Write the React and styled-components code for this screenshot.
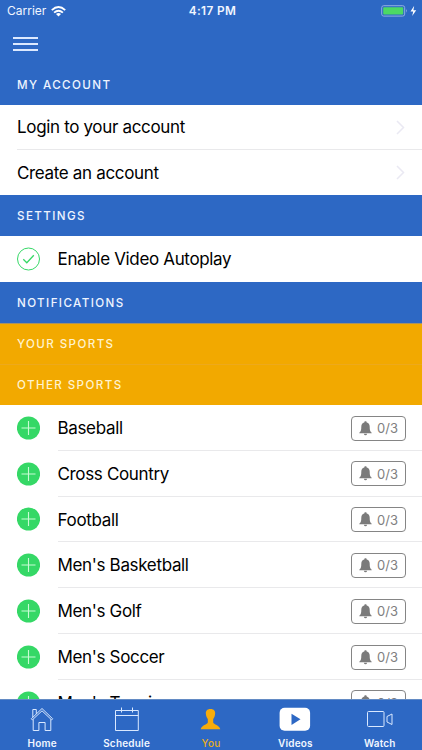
import React from "react";
import styled, { createGlobalStyle } from "styled-components";

const BLUE = "#2d68c4";
const GOLD = "#f2a900";
const GREEN = "#35d866";

const GlobalStyle = createGlobalStyle`
  * { box-sizing: border-box; }
  body { margin: 0; background: #fff; }
`;

const Screen = styled.div`
  width: 422px;
  height: 750px;
  overflow: hidden;
  display: flex;
  flex-direction: column;
  background: #fff;
  color: #000;
  font-family: Inter, "Liberation Sans", sans-serif;
`;

const StatusBar = styled.div`
  height: 22px;
  flex: none;
  display: grid;
  grid-template-columns: 1fr auto 1fr;
  align-items: center;
  padding: 0 4px 0 7px;
  background: ${BLUE};
  color: #f1f6ff;
`;

const Carrier = styled.div`
  display: flex;
  align-items: center;
  gap: 5px;
  font-size: 12px;
  line-height: 14px;
  letter-spacing: 0;
`;

const Clock = styled.div`
  font-size: 11.8px;
  font-weight: 600;
  letter-spacing: 0.4px;
`;

const Battery = styled.div`
  display: flex;
  justify-content: flex-end;
`;

const NavBar = styled.div`
  height: 42px;
  flex: none;
  display: flex;
  align-items: center;
  padding: 1px 13px 0;
  background: ${BLUE};
`;

const MenuButton = styled.button`
  display: flex;
  flex-direction: column;
  gap: 4px;
  width: 25px;
  padding: 0;
  border: 0;
  background: none;
`;

const MenuLine = styled.span`
  height: 2px;
  background: #dce9ff;
`;

const Content = styled.main`
  flex: 1;
  min-height: 0;
  overflow: hidden;
`;

const SectionTitle = styled.h2`
  height: 41px;
  margin: 0;
  padding: 0 17px 1px;
  display: flex;
  align-items: center;
  background: ${({ $tone }) => ($tone === "gold" ? GOLD : BLUE)};
  color: ${({ $tone }) => ($tone === "gold" ? "#fff3cf" : "#edf4ff")};
  border-top: 1px solid ${({ $line }) => $line || "transparent"};
  font-size: 11.6px;
  font-weight: 450;
  letter-spacing: 1.4px;
`;

const Row = styled.div`
  height: ${({ $height }) => $height}px;
  padding-left: 17px;
  display: flex;
`;

const RowIcon = styled.div`
  width: 40.5px;
  flex: none;
  display: flex;
  align-items: center;
`;

const RowBody = styled.div`
  flex: 1;
  padding-right: ${({ $inset }) => $inset}px;
  padding-top: ${({ $drop }) => $drop || 0}px;
  display: flex;
  align-items: center;
  justify-content: space-between;
  border-bottom: ${({ $last }) => ($last ? "0" : "1px solid #e9e9eb")};
`;

const Label = styled.span`
  font-size: 17px;
  letter-spacing: -0.34px;
  white-space: nowrap;
`;

const AlertButton = styled.button`
  width: 55px;
  height: 25px;
  padding: 0 7px;
  display: flex;
  align-items: center;
  justify-content: space-between;
  border: 1px solid #858585;
  border-radius: 4px;
  background: #fff;
  color: #808080;
  font: 400 13px Inter, sans-serif;
`;

const TabBar = styled.nav`
  height: 51px;
  flex: none;
  display: grid;
  grid-template-columns: repeat(5, 1fr);
  background: ${BLUE};
  border-top: 1px solid #638bc4;
`;

const Tab = styled.a`
  display: flex;
  flex-direction: column;
  align-items: center;
  gap: 1px;
  color: ${({ $active }) => ($active ? "#e9ad20" : "#f0f6ff")};
  font-size: 10px;
  font-weight: ${({ $active }) => ($active ? 500 : 600)};
  line-height: 12px;
  letter-spacing: 0.2px;
`;

const TabIcon = styled.svg`
  width: 32px;
  height: 36px;
  overflow: visible;
  fill: none;
  stroke: #d9e8ff;
  stroke-width: 1;
`;

const WifiIcon = () => (
  <svg width="15" height="11" viewBox="0 0 15 11" fill="none" stroke="#fff" strokeWidth="1.9">
    <path d="M.8 4.1Q7.5-1.9 14.2 4.1" />
    <path d="M3.1 6.6Q7.5 2.8 11.9 6.6" />
    <path d="M7.5 10.4 5 7.9Q7.5 6 10 7.9Z" fill="#fff" stroke="none" />
  </svg>
);

const BatteryIcon = () => (
  <svg width="37" height="12" viewBox="0 0 37 12">
    <rect x=".7" y=".7" width="23" height="10.4" rx="2" fill="none" stroke="#91afe0" />
    <rect x="2.2" y="2.2" width="20" height="7.4" rx=".8" fill="#4cd964" />
    <path d="M25.2 4q1.7 1.8 0 3.7Z" fill="#91afe0" />
    <path d="M33.2.8 29.5 6.4h2.7L31.2 11l4-5.8h-2.8Z" fill="#fff" />
  </svg>
);

const Chevron = () => (
  <svg width="9" height="15" viewBox="0 0 9 15" fill="none" stroke="#eae9f3" strokeWidth="1.5">
    <path d="m1 1 6.5 6.5L1 14" />
  </svg>
);

const CheckIcon = () => (
  <svg width="23" height="24" viewBox="0 0 23 24" fill="none" stroke={GREEN}>
    <circle cx="11.5" cy="12" r="11" strokeWidth="1" />
    <path d="m6.3 12.3 3.5 3.4 7-7.4" strokeWidth="1.3" />
  </svg>
);

const PlusIcon = () => (
  <svg width="23" height="24" viewBox="0 0 23 24">
    <circle cx="11.5" cy="12" r="11.6" fill={GREEN} />
    <path d="M4.5 12h14M11.5 5v14" stroke="#c9fbd5" strokeWidth="1.1" />
  </svg>
);

const BellIcon = () => (
  <svg width="13" height="15" viewBox="0 0 13 15" fill="#7b7b7b">
    <path d="M6.5.3c.8 0 1.2.5 1.2 1.2 2.1.6 3 2.1 3 4.3 0 3.4.4 4.8 2 5.9v.5H.3v-.5c1.6-1.1 2-2.5 2-5.9 0-2.2.9-3.7 3-4.3 0-.7.4-1.2 1.2-1.2Z" />
    <path d="M4.9 12.8h3.2q-.2 1.5-1.6 1.5t-1.6-1.5Z" />
  </svg>
);

const tabs = [
  {
    label: "Home",
    icon: (
      <>
        <path d="M5.3 18.8 16 8.5l10.7 10.3-1.1 1.1L16 10.8l-9.6 9.1Z" />
        <path d="M7.2 19.3v11.2h5.7v-8h6.2v8h5.7V19.3M6.8 17.3V9.5h3.5v4.4" />
      </>
    ),
  },
  {
    label: "Schedule",
    icon: <path d="M4.5 10.5h22.8v20H4.5ZM4.5 15.5h22.8M10.5 7.5v5M21.5 7.5v5" />,
  },
  {
    label: "You",
    active: true,
    icon: (
      <path
        d="M15.5 9c-3.7 0-5 2.2-4.6 5 .1 1 .3 2.1.7 3 .3.8.7 1.4 1.2 1.9v3.5c-.5 2-6.1 2.5-7.1 6.8h19.6c-1-4.3-6.6-4.8-7.1-6.8v-3.5c.5-.5.9-1.1 1.2-1.9.4-.9.6-2 .7-3 .4-2.8-.9-5-4.6-5Z"
        fill="#f7ac0b"
        stroke="none"
      />
    ),
  },
  {
    label: "Videos",
    icon: (
      <>
        <rect x=".6" y="7.7" width="30.5" height="23" rx="5" fill="#fff" stroke="none" />
        <path d="m12.5 13.7 9 5.6-9 5.6Z" fill={BLUE} stroke="none" />
      </>
    ),
  },
  {
    label: "Watch",
    icon: (
      <>
        <rect x="3.5" y="11.5" width="16.5" height="15" rx="1" />
        <path d="M23 16.5 28 14v10.5L23 22Z" />
      </>
    ),
  },
];

const sports = ["Baseball", "Cross Country", "Football", "Men's Basketball", "Men's Golf", "Men's Soccer", "Men's Tennis"];

export default function App() {
  return (
    <Screen>
      <GlobalStyle />
      <StatusBar>
        <Carrier>Carrier <WifiIcon /></Carrier>
        <Clock>4:17 PM</Clock>
        <Battery><BatteryIcon /></Battery>
      </StatusBar>
      <NavBar>
        <MenuButton aria-label="Menu"><MenuLine /><MenuLine /><MenuLine /></MenuButton>
      </NavBar>
      <Content>
        <SectionTitle>MY ACCOUNT</SectionTitle>
        <Row $height={45}>
          <RowBody $inset={17}><Label>Login to your account</Label><Chevron /></RowBody>
        </Row>
        <Row $height={45}>
          <RowBody $inset={17} $last><Label>Create an account</Label><Chevron /></RowBody>
        </Row>
        <SectionTitle>SETTINGS</SectionTitle>
        <Row $height={46}>
          <RowIcon><CheckIcon /></RowIcon>
          <RowBody $inset={17} $last><Label>Enable Video Autoplay</Label></RowBody>
        </Row>
        <SectionTitle>NOTIFICATIONS</SectionTitle>
        <SectionTitle $tone="gold" $line="#a69265">YOUR SPORTS</SectionTitle>
        <SectionTitle $tone="gold" $line="#eda91c">OTHER SPORTS</SectionTitle>
        {sports.map((sport) => (
          <Row key={sport} $height={45.8}>
            <RowIcon><PlusIcon /></RowIcon>
            <RowBody $inset={16} $drop={1.4}>
              <Label>{sport}</Label>
              <AlertButton><BellIcon />0/3</AlertButton>
            </RowBody>
          </Row>
        ))}
      </Content>
      <TabBar>
        {tabs.map(({ label, active, icon }) => (
          <Tab key={label} $active={active}>
            <TabIcon viewBox="0 0 32 36">{icon}</TabIcon>
            {label}
          </Tab>
        ))}
      </TabBar>
    </Screen>
  );
}
